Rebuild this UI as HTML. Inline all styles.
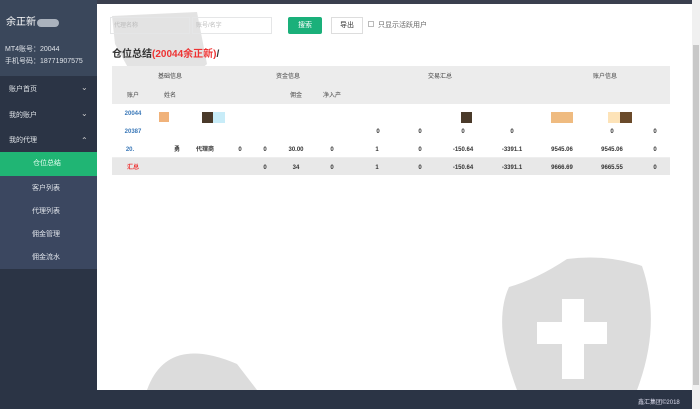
<!DOCTYPE html>
<html><head><meta charset="utf-8"><style>
*{margin:0;padding:0;box-sizing:border-box}
body{width:700px;height:409px;overflow:hidden;background:#2b3445;font-family:"Liberation Sans","Noto Sans CJK SC",sans-serif;position:relative;font-size:7px;color:#333;line-height:1}
.a{position:absolute}
.sb{left:0;top:0;width:97px;height:409px;background:#2b3445}
.c{transform:translateX(-50%);white-space:nowrap}
</style></head><body>
<div class="a sb"></div>
<div class="a" style="left:0;top:0;width:97px;height:76px;background:#3a475b"></div>
<div class="a" style="left:6px;top:18px;color:#fff;font-size:10px">余正新</div>
<div class="a" style="left:37px;top:19px;width:22px;height:8px;border-radius:4px;background:#aab2bd"></div>
<div class="a" style="left:5px;top:46px;color:#e0e4ea;font-size:7px">MT4账号：20044</div>
<div class="a" style="left:5px;top:58px;color:#e0e4ea;font-size:7px">手机号码：18771907575</div>
<div class="a" style="left:9px;top:86px;color:#dfe3e8">账户首页</div><div class="a" style="left:81px;top:84px;color:#ccc;font-size:8px">⌄</div>
<div class="a" style="left:9px;top:112px;color:#dfe3e8">我的账户</div><div class="a" style="left:81px;top:110px;color:#ccc;font-size:8px">⌄</div>
<div class="a" style="left:9px;top:137px;color:#dfe3e8">我的代理</div><div class="a" style="left:81px;top:137px;color:#ccc;font-size:8px">⌃</div>
<div class="a" style="left:0;top:152px;width:97px;height:24px;background:#20b574"></div>
<div class="a" style="left:33px;top:160px;color:#e8fff2">仓位总结</div>
<div class="a" style="left:0;top:176px;width:97px;height:93px;background:#3b4760"></div>
<div class="a" style="left:32px;top:185px;color:#e0e4ea">客户列表</div>
<div class="a" style="left:32px;top:208px;color:#e0e4ea">代理列表</div>
<div class="a" style="left:32px;top:231px;color:#e0e4ea">佣金管理</div>
<div class="a" style="left:32px;top:254px;color:#e0e4ea">佣金流水</div>
<div class="a" style="left:97px;top:0;width:603px;height:4px;background:#3a3f4e"></div>
<div class="a" style="left:97px;top:4px;width:595px;height:386px;background:#fff;overflow:hidden">
<svg class="a" style="left:0;top:0" width="595" height="386">
<g fill="#dcdcdc"><path d="M15 12 L100 8 L110 60 L70 95 L40 80 L18 40Z" opacity=".8"/>
<path d="M470 255 Q510 250 545 262 Q565 320 540 386 L420 386 Q395 320 412 283 Q440 275 470 255Z"/>
<path d="M50 386 Q70 330 140 360 L160 386Z"/></g>
<path fill="#fff" d="M465 295 L487 295 L487 318 L510 318 L510 340 L487 340 L487 375 L465 375 L465 340 L440 340 L440 318 L465 318Z"/>
</svg>
<div class="a" style="left:13px;top:13px;width:80px;height:17px;border:1px solid #e5e6e7"></div>
<div class="a" style="left:17px;top:19px;color:#bbb;font-size:6px">代理名称</div>
<div class="a" style="left:95px;top:13px;width:80px;height:17px;border:1px solid #e5e6e7"></div>
<div class="a" style="left:99px;top:19px;color:#bbb;font-size:6px">账号/名字</div>
<div class="a" style="left:191px;top:13px;width:34px;height:17px;background:#1ab07a;border-radius:2px;color:#fff;text-align:center;line-height:17px;font-size:7px">搜索</div>
<div class="a" style="left:234px;top:13px;width:32px;height:17px;border:1px solid #ddd;text-align:center;line-height:15px;font-size:7px">导出</div>
<div class="a" style="left:271px;top:17px;width:6px;height:6px;border:1px solid #bbb"></div>
<div class="a" style="left:281px;top:18px;font-size:7px;color:#666">只显示活跃用户</div>
<div class="a" style="left:15px;top:46px;font-size:10px;font-weight:bold;color:#333">仓位总结<span style="color:#e33">(20044余正新)</span>/</div>
<div class="a" style="left:15px;top:62px;width:558px;height:38px;background:#ececec"></div>
<div class="a" style="left:15px;top:100px;width:558px;height:54px;background:#fff;border-bottom:1px solid #eee"></div>
<div class="a" style="left:15px;top:154px;width:558px;height:17px;background:#e8e8e8"></div>
</div>
<div style="position:absolute;left:0;top:0;font-size:6px;color:#444">
<div class="a c" style="left:170px;top:74px">基础信息</div>
<div class="a c" style="left:288px;top:74px">资金信息</div>
<div class="a c" style="left:440px;top:74px">交易汇总</div>
<div class="a c" style="left:605px;top:74px">账户信息</div>
<div class="a c" style="left:133px;top:93px">账户</div>
<div class="a c" style="left:170px;top:93px">姓名</div>
<div class="a c" style="left:296px;top:93px">佣金</div>
<div class="a c" style="left:332px;top:93px">净入产</div>
</div>
<div class="a" style="left:159px;top:112px;width:10px;height:10px;background:#f0b27a"></div>
<div class="a" style="left:202px;top:112px;width:11px;height:11px;background:#4a3a2a"></div>
<div class="a" style="left:213px;top:112px;width:12px;height:11px;background:#c8ecf8"></div>
<div class="a" style="left:461px;top:112px;width:11px;height:11px;background:#4a3a2a"></div>
<div class="a" style="left:551px;top:112px;width:22px;height:11px;background:#efbb80"></div>
<div class="a" style="left:608px;top:112px;width:12px;height:11px;background:#fde3b8"></div>
<div class="a" style="left:620px;top:112px;width:12px;height:11px;background:#6a4a2a"></div>
<div style="position:absolute;left:0;top:0;font-size:6px;color:#333;font-weight:bold">
<div class="a c" style="left:133px;top:111px;color:#3a78b8">20044</div>
<div class="a c" style="left:133px;top:129px;color:#3a78b8">20387</div>
<div class="a c" style="left:378px;top:129px">0</div><div class="a c" style="left:420px;top:129px">0</div><div class="a c" style="left:463px;top:129px">0</div><div class="a c" style="left:512px;top:129px">0</div><div class="a c" style="left:612px;top:129px">0</div><div class="a c" style="left:655px;top:129px">0</div>
<div class="a c" style="left:130px;top:147px;color:#3a78b8">20.</div>
<div class="a c" style="left:177px;top:147px">勇</div><div class="a c" style="left:205px;top:147px">代理商</div>
<div class="a c" style="left:240px;top:147px">0</div><div class="a c" style="left:265px;top:147px">0</div><div class="a c" style="left:296px;top:147px">30.00</div><div class="a c" style="left:332px;top:147px">0</div><div class="a c" style="left:377px;top:147px">1</div><div class="a c" style="left:420px;top:147px">0</div><div class="a c" style="left:463px;top:147px">-150.64</div><div class="a c" style="left:512px;top:147px">-3391.1</div><div class="a c" style="left:562px;top:147px">9545.06</div><div class="a c" style="left:612px;top:147px">9545.06</div><div class="a c" style="left:655px;top:147px">0</div>
<div class="a c" style="left:133px;top:165px;color:#e33">汇总</div>
<div class="a c" style="left:265px;top:165px">0</div><div class="a c" style="left:296px;top:165px">34</div><div class="a c" style="left:332px;top:165px">0</div><div class="a c" style="left:377px;top:165px">1</div><div class="a c" style="left:420px;top:165px">0</div><div class="a c" style="left:463px;top:165px">-150.64</div><div class="a c" style="left:512px;top:165px">-3391.1</div><div class="a c" style="left:562px;top:165px">9666.69</div><div class="a c" style="left:612px;top:165px">9665.55</div><div class="a c" style="left:655px;top:165px">0</div>
</div>
<div class="a" style="left:692px;top:0;width:8px;height:409px;background:#f0f0f0"></div>
<div class="a" style="left:693px;top:45px;width:6px;height:340px;background:#c8c8c8"></div>
<div class="a" style="left:638px;top:400px;color:#dde;font-size:6px">鑫汇集团©2018</div>
</body></html>
